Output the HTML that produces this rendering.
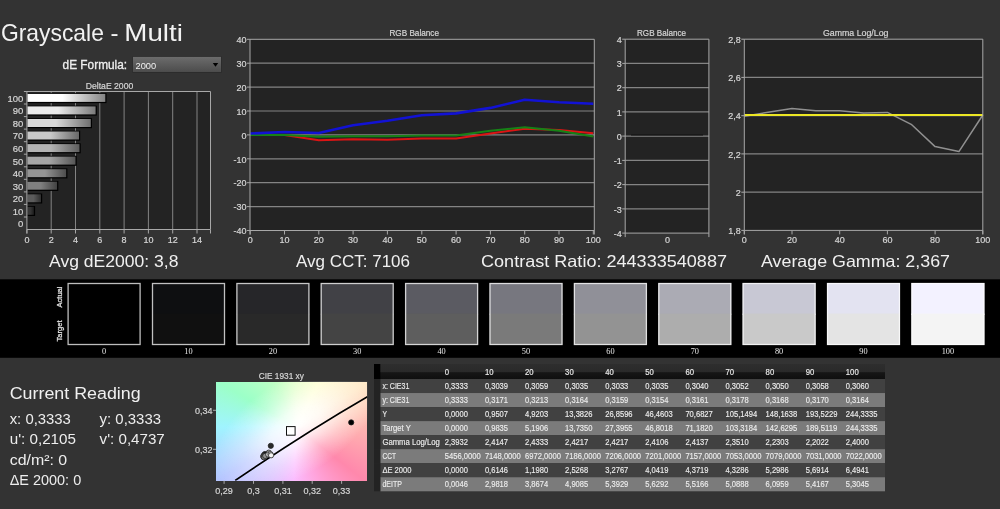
<!DOCTYPE html>
<html><head><meta charset="utf-8"><title>Grayscale - Multi</title>
<style>
html,body{margin:0;padding:0;background:#333333;}
body{width:1000px;height:509px;overflow:hidden;position:relative;font-family:"Liberation Sans",sans-serif;}
svg{position:absolute;left:0;top:0;display:block;will-change:transform}
text{font-family:"Liberation Sans",sans-serif;}
.l{stroke:#d6d6d6;stroke-width:0.2px}
.t{stroke:#ececec;stroke-width:0.15px}
.ser{font-family:"Liberation Serif",serif;}
</style></head><body>
<div id="cie" style="position:absolute;left:216px;top:381.6px;width:151.4px;height:99.2px;background:conic-gradient(from 0deg at 80px 45px, #e4ffc8 0deg, #ffffc8 27deg, #ffe6c0 58deg, #ffb4b0 90deg, #ff88ac 128deg, #ffa4dc 158deg, #fbbcff 182deg, #d8c0ff 207deg, #b4c4ff 235deg, #a0f4ff 270deg, #9cffc8 300deg, #c0ffc4 335deg, #e4ffc8 360deg)"></div>
<svg width="1000" height="509" viewBox="0 0 1000 509">
<defs>
<linearGradient id="dd" x1="0" y1="0" x2="0" y2="1"><stop offset="0" stop-color="#6c6c6c"/><stop offset="1" stop-color="#4c4c4c"/></linearGradient>
<linearGradient id="hd" x1="0" y1="0" x2="0" y2="1"><stop offset="0" stop-color="#2e2e2e"/><stop offset="0.5" stop-color="#2a2a2a"/><stop offset="0.58" stop-color="#161616"/><stop offset="1" stop-color="#0f0f0f"/></linearGradient>
<radialGradient id="wp" gradientUnits="userSpaceOnUse" cx="0" cy="0" r="1" gradientTransform="translate(296 426) rotate(-33) scale(95 48)"><stop offset="0" stop-color="#fff" stop-opacity="1"/><stop offset="0.3" stop-color="#fff" stop-opacity="0.8"/><stop offset="0.65" stop-color="#fff" stop-opacity="0.35"/><stop offset="1" stop-color="#fff" stop-opacity="0"/></radialGradient>
<clipPath id="cieclip"><rect x="216" y="381.6" width="151.4" height="99.2"/></clipPath>

<linearGradient id="b100" x1="0" y1="0" x2="1" y2="0"><stop offset="0" stop-color="rgb(255,255,255)"/><stop offset="0.45" stop-color="rgb(255,255,255)"/><stop offset="1" stop-color="rgb(132,132,132)"/></linearGradient>
<linearGradient id="b90" x1="0" y1="0" x2="1" y2="0"><stop offset="0" stop-color="rgb(235,235,235)"/><stop offset="0.45" stop-color="rgb(235,235,235)"/><stop offset="1" stop-color="rgb(122,122,122)"/></linearGradient>
<linearGradient id="b80" x1="0" y1="0" x2="1" y2="0"><stop offset="0" stop-color="rgb(217,217,217)"/><stop offset="0.45" stop-color="rgb(217,217,217)"/><stop offset="1" stop-color="rgb(112,112,112)"/></linearGradient>
<linearGradient id="b70" x1="0" y1="0" x2="1" y2="0"><stop offset="0" stop-color="rgb(200,200,200)"/><stop offset="0.45" stop-color="rgb(200,200,200)"/><stop offset="1" stop-color="rgb(104,104,104)"/></linearGradient>
<linearGradient id="b60" x1="0" y1="0" x2="1" y2="0"><stop offset="0" stop-color="rgb(180,180,180)"/><stop offset="0.45" stop-color="rgb(180,180,180)"/><stop offset="1" stop-color="rgb(93,93,93)"/></linearGradient>
<linearGradient id="b50" x1="0" y1="0" x2="1" y2="0"><stop offset="0" stop-color="rgb(166,166,166)"/><stop offset="0.45" stop-color="rgb(166,166,166)"/><stop offset="1" stop-color="rgb(86,86,86)"/></linearGradient>
<linearGradient id="b40" x1="0" y1="0" x2="1" y2="0"><stop offset="0" stop-color="rgb(149,149,149)"/><stop offset="0.45" stop-color="rgb(149,149,149)"/><stop offset="1" stop-color="rgb(77,77,77)"/></linearGradient>
<linearGradient id="b30" x1="0" y1="0" x2="1" y2="0"><stop offset="0" stop-color="rgb(128,128,128)"/><stop offset="0.45" stop-color="rgb(128,128,128)"/><stop offset="1" stop-color="rgb(66,66,66)"/></linearGradient>
<linearGradient id="b20" x1="0" y1="0" x2="1" y2="0"><stop offset="0" stop-color="rgb(92,92,92)"/><stop offset="0.45" stop-color="rgb(92,92,92)"/><stop offset="1" stop-color="rgb(47,47,47)"/></linearGradient>
<linearGradient id="b10" x1="0" y1="0" x2="1" y2="0"><stop offset="0" stop-color="rgb(54,54,54)"/><stop offset="0.45" stop-color="rgb(54,54,54)"/><stop offset="1" stop-color="rgb(28,28,28)"/></linearGradient>
<linearGradient id="b0" x1="0" y1="0" x2="1" y2="0"><stop offset="0" stop-color="rgb(40,40,40)"/><stop offset="0.45" stop-color="rgb(40,40,40)"/><stop offset="1" stop-color="rgb(20,20,20)"/></linearGradient>
</defs>
<text y="41" font-size="24" fill="#f2f2f2"><tspan x="0.9" textLength="103" lengthAdjust="spacingAndGlyphs">Grayscale</tspan><tspan> </tspan><tspan x="110.6" textLength="8" lengthAdjust="spacingAndGlyphs">-</tspan><tspan> </tspan><tspan x="124.3" textLength="58.5" lengthAdjust="spacingAndGlyphs">Multi</tspan></text>
<text x="62.6" y="69.3" font-size="12" fill="#efefef" stroke="#efefef" stroke-width="0.3" textLength="64.5" lengthAdjust="spacingAndGlyphs">dE Formula:</text>
<rect x="132.4" y="56.4" width="89.4" height="16.4" fill="#2b2b2b"/>
<rect x="133" y="56.9" width="88" height="15.1" fill="url(#dd)"/>
<text x="135.5" y="69.3" font-size="9.5" fill="#f0f0f0" textLength="20.7" lengthAdjust="spacingAndGlyphs">2000</text>
<path d="M212.8 63.1 L218.2 63.1 L215.5 66.7 Z" fill="#000"/>
<text x="109.5" y="88.6" class="l" font-size="9" fill="#d6d6d6" text-anchor="middle" textLength="47.5" lengthAdjust="spacingAndGlyphs">DeltaE 2000</text>
<rect x="26.9" y="91.5" width="183.6" height="138.0" fill="#232323"/>
<line x1="51.2" y1="91.5" x2="51.2" y2="229.5" stroke="#848484" stroke-width="1"/>
<line x1="75.5" y1="91.5" x2="75.5" y2="229.5" stroke="#848484" stroke-width="1"/>
<line x1="99.8" y1="91.5" x2="99.8" y2="229.5" stroke="#848484" stroke-width="1"/>
<line x1="124.1" y1="91.5" x2="124.1" y2="229.5" stroke="#848484" stroke-width="1"/>
<line x1="148.4" y1="91.5" x2="148.4" y2="229.5" stroke="#848484" stroke-width="1"/>
<line x1="172.7" y1="91.5" x2="172.7" y2="229.5" stroke="#848484" stroke-width="1"/>
<line x1="197.0" y1="91.5" x2="197.0" y2="229.5" stroke="#848484" stroke-width="1"/>
<rect x="27.4" y="93.1" width="79.1" height="10.0" fill="#000"/>
<rect x="27.4" y="93.9" width="77.9" height="8" fill="url(#b100)"/>
<text x="23.3" y="101.8" class="l" font-size="9.5" fill="#d6d6d6" text-anchor="end">100</text>
<line x1="23.9" y1="91.5" x2="26.9" y2="91.5" stroke="#a8a8a8" stroke-width="1"/>
<rect x="27.4" y="105.6" width="69.4" height="10.0" fill="#000"/>
<rect x="27.4" y="106.4" width="68.2" height="8" fill="url(#b90)"/>
<text x="23.3" y="114.3" class="l" font-size="9.5" fill="#d6d6d6" text-anchor="end">90</text>
<line x1="23.9" y1="104.0" x2="26.9" y2="104.0" stroke="#a8a8a8" stroke-width="1"/>
<rect x="27.4" y="118.2" width="64.6" height="10.0" fill="#000"/>
<rect x="27.4" y="119.0" width="63.4" height="8" fill="url(#b80)"/>
<text x="23.3" y="126.9" class="l" font-size="9.5" fill="#d6d6d6" text-anchor="end">80</text>
<line x1="23.9" y1="116.6" x2="26.9" y2="116.6" stroke="#a8a8a8" stroke-width="1"/>
<rect x="27.4" y="130.7" width="52.8" height="10.0" fill="#000"/>
<rect x="27.4" y="131.5" width="51.6" height="8" fill="url(#b70)"/>
<text x="23.3" y="139.4" class="l" font-size="9.5" fill="#d6d6d6" text-anchor="end">70</text>
<line x1="23.9" y1="129.1" x2="26.9" y2="129.1" stroke="#a8a8a8" stroke-width="1"/>
<rect x="27.4" y="143.3" width="53.3" height="10.0" fill="#000"/>
<rect x="27.4" y="144.1" width="52.1" height="8" fill="url(#b60)"/>
<text x="23.3" y="152.0" class="l" font-size="9.5" fill="#d6d6d6" text-anchor="end">60</text>
<line x1="23.9" y1="141.7" x2="26.9" y2="141.7" stroke="#a8a8a8" stroke-width="1"/>
<rect x="27.4" y="155.8" width="49.3" height="10.0" fill="#000"/>
<rect x="27.4" y="156.6" width="48.1" height="8" fill="url(#b50)"/>
<text x="23.3" y="164.5" class="l" font-size="9.5" fill="#d6d6d6" text-anchor="end">50</text>
<line x1="23.9" y1="154.2" x2="26.9" y2="154.2" stroke="#a8a8a8" stroke-width="1"/>
<rect x="27.4" y="168.4" width="40.0" height="10.0" fill="#000"/>
<rect x="27.4" y="169.2" width="38.8" height="8" fill="url(#b40)"/>
<text x="23.3" y="177.0" class="l" font-size="9.5" fill="#d6d6d6" text-anchor="end">40</text>
<line x1="23.9" y1="166.8" x2="26.9" y2="166.8" stroke="#a8a8a8" stroke-width="1"/>
<rect x="27.4" y="180.9" width="30.9" height="10.0" fill="#000"/>
<rect x="27.4" y="181.7" width="29.7" height="8" fill="url(#b30)"/>
<text x="23.3" y="189.6" class="l" font-size="9.5" fill="#d6d6d6" text-anchor="end">30</text>
<line x1="23.9" y1="179.3" x2="26.9" y2="179.3" stroke="#a8a8a8" stroke-width="1"/>
<rect x="27.4" y="193.5" width="14.8" height="10.0" fill="#000"/>
<rect x="27.4" y="194.3" width="13.6" height="8" fill="url(#b20)"/>
<text x="23.3" y="202.1" class="l" font-size="9.5" fill="#d6d6d6" text-anchor="end">20</text>
<line x1="23.9" y1="191.9" x2="26.9" y2="191.9" stroke="#a8a8a8" stroke-width="1"/>
<rect x="27.4" y="206.0" width="7.7" height="10.0" fill="#000"/>
<rect x="27.4" y="206.8" width="6.5" height="8" fill="url(#b10)"/>
<text x="23.3" y="214.7" class="l" font-size="9.5" fill="#d6d6d6" text-anchor="end">10</text>
<line x1="23.9" y1="204.4" x2="26.9" y2="204.4" stroke="#a8a8a8" stroke-width="1"/>
<text x="23.3" y="227.2" class="l" font-size="9.5" fill="#d6d6d6" text-anchor="end">0</text>
<line x1="23.9" y1="217.0" x2="26.9" y2="217.0" stroke="#a8a8a8" stroke-width="1"/>
<path d="M26.9 233.5 V91.5 H210.5 V229.5 H26.9" fill="none" stroke="#a8a8a8" stroke-width="1"/>
<line x1="26.9" y1="229.5" x2="26.9" y2="233.5" stroke="#a8a8a8" stroke-width="1"/>
<text x="26.9" y="242.6" class="l" font-size="9" fill="#d6d6d6" text-anchor="middle">0</text>
<line x1="51.2" y1="229.5" x2="51.2" y2="233.5" stroke="#a8a8a8" stroke-width="1"/>
<text x="51.2" y="242.6" class="l" font-size="9" fill="#d6d6d6" text-anchor="middle">2</text>
<line x1="75.5" y1="229.5" x2="75.5" y2="233.5" stroke="#a8a8a8" stroke-width="1"/>
<text x="75.5" y="242.6" class="l" font-size="9" fill="#d6d6d6" text-anchor="middle">4</text>
<line x1="99.8" y1="229.5" x2="99.8" y2="233.5" stroke="#a8a8a8" stroke-width="1"/>
<text x="99.8" y="242.6" class="l" font-size="9" fill="#d6d6d6" text-anchor="middle">6</text>
<line x1="124.1" y1="229.5" x2="124.1" y2="233.5" stroke="#a8a8a8" stroke-width="1"/>
<text x="124.1" y="242.6" class="l" font-size="9" fill="#d6d6d6" text-anchor="middle">8</text>
<line x1="148.4" y1="229.5" x2="148.4" y2="233.5" stroke="#a8a8a8" stroke-width="1"/>
<text x="148.4" y="242.6" class="l" font-size="9" fill="#d6d6d6" text-anchor="middle">10</text>
<line x1="172.7" y1="229.5" x2="172.7" y2="233.5" stroke="#a8a8a8" stroke-width="1"/>
<text x="172.7" y="242.6" class="l" font-size="9" fill="#d6d6d6" text-anchor="middle">12</text>
<line x1="197.0" y1="229.5" x2="197.0" y2="233.5" stroke="#a8a8a8" stroke-width="1"/>
<text x="197.0" y="242.6" class="l" font-size="9" fill="#d6d6d6" text-anchor="middle">14</text>
<line x1="210.5" y1="229.5" x2="210.5" y2="233.5" stroke="#a8a8a8" stroke-width="1"/>
<text x="414.2" y="35.6" class="l" font-size="9" fill="#d6d6d6" text-anchor="middle" textLength="49.6" lengthAdjust="spacingAndGlyphs">RGB Balance</text>
<rect x="250" y="39.3" width="344.29999999999995" height="191.2" fill="#232323"/>
<line x1="247" y1="230.5" x2="250" y2="230.5" stroke="#a8a8a8" stroke-width="1"/>
<text x="246.5" y="234.2" class="l" font-size="9" fill="#d6d6d6" text-anchor="end">-40</text>
<line x1="250" y1="206.6" x2="594.3" y2="206.6" stroke="#848484" stroke-width="1.2"/>
<line x1="247" y1="206.6" x2="250" y2="206.6" stroke="#a8a8a8" stroke-width="1"/>
<text x="246.5" y="210.3" class="l" font-size="9" fill="#d6d6d6" text-anchor="end">-30</text>
<line x1="250" y1="182.7" x2="594.3" y2="182.7" stroke="#848484" stroke-width="1.2"/>
<line x1="247" y1="182.7" x2="250" y2="182.7" stroke="#a8a8a8" stroke-width="1"/>
<text x="246.5" y="186.4" class="l" font-size="9" fill="#d6d6d6" text-anchor="end">-20</text>
<line x1="250" y1="158.8" x2="594.3" y2="158.8" stroke="#848484" stroke-width="1.2"/>
<line x1="247" y1="158.8" x2="250" y2="158.8" stroke="#a8a8a8" stroke-width="1"/>
<text x="246.5" y="162.5" class="l" font-size="9" fill="#d6d6d6" text-anchor="end">-10</text>
<line x1="250" y1="134.9" x2="594.3" y2="134.9" stroke="#848484" stroke-width="1.2"/>
<line x1="247" y1="134.9" x2="250" y2="134.9" stroke="#a8a8a8" stroke-width="1"/>
<text x="246.5" y="138.6" class="l" font-size="9" fill="#d6d6d6" text-anchor="end">0</text>
<line x1="250" y1="111.0" x2="594.3" y2="111.0" stroke="#848484" stroke-width="1.2"/>
<line x1="247" y1="111.0" x2="250" y2="111.0" stroke="#a8a8a8" stroke-width="1"/>
<text x="246.5" y="114.7" class="l" font-size="9" fill="#d6d6d6" text-anchor="end">10</text>
<line x1="250" y1="87.1" x2="594.3" y2="87.1" stroke="#848484" stroke-width="1.2"/>
<line x1="247" y1="87.1" x2="250" y2="87.1" stroke="#a8a8a8" stroke-width="1"/>
<text x="246.5" y="90.8" class="l" font-size="9" fill="#d6d6d6" text-anchor="end">20</text>
<line x1="250" y1="63.2" x2="594.3" y2="63.2" stroke="#848484" stroke-width="1.2"/>
<line x1="247" y1="63.2" x2="250" y2="63.2" stroke="#a8a8a8" stroke-width="1"/>
<text x="246.5" y="66.9" class="l" font-size="9" fill="#d6d6d6" text-anchor="end">30</text>
<line x1="247" y1="39.3" x2="250" y2="39.3" stroke="#a8a8a8" stroke-width="1"/>
<text x="246.5" y="43.0" class="l" font-size="9" fill="#d6d6d6" text-anchor="end">40</text>
<polyline points="250.2,134.9 284.5,134.9 318.8,140.2 353.1,139.2 387.4,139.7 421.8,138.5 456.1,138.5 490.4,133.6 524.7,128.7 559.0,129.9 593.3,133.2" fill="none" stroke="#dc1414" stroke-width="2" stroke-linejoin="round"/>
<polyline points="250.2,134.9 284.5,134.9 318.8,136.7 353.1,136.3 387.4,136.3 421.8,135.6 456.1,135.4 490.4,130.8 524.7,127.3 559.0,130.8 593.3,136.6" fill="none" stroke="#168216" stroke-width="2" stroke-linejoin="round"/>
<polyline points="250.2,133.5 284.5,132.0 318.8,133.0 353.1,125.3 387.4,120.8 421.8,115.3 456.1,113.4 490.4,107.9 524.7,99.8 559.0,102.2 593.3,103.8" fill="none" stroke="#1212d4" stroke-width="2.6" stroke-linejoin="round"/>
<path d="M250 234.5 V39.3 H594.3 V234.5 M250 230.5 H594.3" fill="none" stroke="#a8a8a8" stroke-width="1"/>
<line x1="250.2" y1="230.5" x2="250.2" y2="234.5" stroke="#a8a8a8" stroke-width="1"/>
<text x="250.2" y="242.7" class="l" font-size="9" fill="#d6d6d6" text-anchor="middle">0</text>
<line x1="284.5" y1="230.5" x2="284.5" y2="234.5" stroke="#a8a8a8" stroke-width="1"/>
<text x="284.5" y="242.7" class="l" font-size="9" fill="#d6d6d6" text-anchor="middle">10</text>
<line x1="318.8" y1="230.5" x2="318.8" y2="234.5" stroke="#a8a8a8" stroke-width="1"/>
<text x="318.8" y="242.7" class="l" font-size="9" fill="#d6d6d6" text-anchor="middle">20</text>
<line x1="353.1" y1="230.5" x2="353.1" y2="234.5" stroke="#a8a8a8" stroke-width="1"/>
<text x="353.1" y="242.7" class="l" font-size="9" fill="#d6d6d6" text-anchor="middle">30</text>
<line x1="387.4" y1="230.5" x2="387.4" y2="234.5" stroke="#a8a8a8" stroke-width="1"/>
<text x="387.4" y="242.7" class="l" font-size="9" fill="#d6d6d6" text-anchor="middle">40</text>
<line x1="421.8" y1="230.5" x2="421.8" y2="234.5" stroke="#a8a8a8" stroke-width="1"/>
<text x="421.8" y="242.7" class="l" font-size="9" fill="#d6d6d6" text-anchor="middle">50</text>
<line x1="456.1" y1="230.5" x2="456.1" y2="234.5" stroke="#a8a8a8" stroke-width="1"/>
<text x="456.1" y="242.7" class="l" font-size="9" fill="#d6d6d6" text-anchor="middle">60</text>
<line x1="490.4" y1="230.5" x2="490.4" y2="234.5" stroke="#a8a8a8" stroke-width="1"/>
<text x="490.4" y="242.7" class="l" font-size="9" fill="#d6d6d6" text-anchor="middle">70</text>
<line x1="524.7" y1="230.5" x2="524.7" y2="234.5" stroke="#a8a8a8" stroke-width="1"/>
<text x="524.7" y="242.7" class="l" font-size="9" fill="#d6d6d6" text-anchor="middle">80</text>
<line x1="559.0" y1="230.5" x2="559.0" y2="234.5" stroke="#a8a8a8" stroke-width="1"/>
<text x="559.0" y="242.7" class="l" font-size="9" fill="#d6d6d6" text-anchor="middle">90</text>
<line x1="593.3" y1="230.5" x2="593.3" y2="234.5" stroke="#a8a8a8" stroke-width="1"/>
<text x="593.3" y="242.7" class="l" font-size="9" fill="#d6d6d6" text-anchor="middle">100</text>
<text x="661.5" y="35.6" class="l" font-size="9" fill="#d6d6d6" text-anchor="middle" textLength="49" lengthAdjust="spacingAndGlyphs">RGB Balance</text>
<rect x="625.2" y="39.2" width="83.69999999999993" height="193.89999999999998" fill="#232323"/>
<line x1="622.2" y1="233.1" x2="625.2" y2="233.1" stroke="#a8a8a8" stroke-width="1"/>
<text x="621.7" y="236.8" class="l" font-size="9" fill="#d6d6d6" text-anchor="end">-4</text>
<line x1="625.2" y1="208.9" x2="708.9" y2="208.9" stroke="#848484" stroke-width="1.2"/>
<line x1="622.2" y1="208.9" x2="625.2" y2="208.9" stroke="#a8a8a8" stroke-width="1"/>
<text x="621.7" y="212.6" class="l" font-size="9" fill="#d6d6d6" text-anchor="end">-3</text>
<line x1="625.2" y1="184.6" x2="708.9" y2="184.6" stroke="#848484" stroke-width="1.2"/>
<line x1="622.2" y1="184.6" x2="625.2" y2="184.6" stroke="#a8a8a8" stroke-width="1"/>
<text x="621.7" y="188.3" class="l" font-size="9" fill="#d6d6d6" text-anchor="end">-2</text>
<line x1="625.2" y1="160.4" x2="708.9" y2="160.4" stroke="#848484" stroke-width="1.2"/>
<line x1="622.2" y1="160.4" x2="625.2" y2="160.4" stroke="#a8a8a8" stroke-width="1"/>
<text x="621.7" y="164.1" class="l" font-size="9" fill="#d6d6d6" text-anchor="end">-1</text>
<line x1="625.2" y1="136.1" x2="708.9" y2="136.1" stroke="#848484" stroke-width="1.2"/>
<line x1="622.2" y1="136.1" x2="625.2" y2="136.1" stroke="#a8a8a8" stroke-width="1"/>
<text x="621.7" y="139.8" class="l" font-size="9" fill="#d6d6d6" text-anchor="end">0</text>
<line x1="625.2" y1="111.9" x2="708.9" y2="111.9" stroke="#848484" stroke-width="1.2"/>
<line x1="622.2" y1="111.9" x2="625.2" y2="111.9" stroke="#a8a8a8" stroke-width="1"/>
<text x="621.7" y="115.6" class="l" font-size="9" fill="#d6d6d6" text-anchor="end">1</text>
<line x1="625.2" y1="87.7" x2="708.9" y2="87.7" stroke="#848484" stroke-width="1.2"/>
<line x1="622.2" y1="87.7" x2="625.2" y2="87.7" stroke="#a8a8a8" stroke-width="1"/>
<text x="621.7" y="91.4" class="l" font-size="9" fill="#d6d6d6" text-anchor="end">2</text>
<line x1="625.2" y1="63.4" x2="708.9" y2="63.4" stroke="#848484" stroke-width="1.2"/>
<line x1="622.2" y1="63.4" x2="625.2" y2="63.4" stroke="#a8a8a8" stroke-width="1"/>
<text x="621.7" y="67.1" class="l" font-size="9" fill="#d6d6d6" text-anchor="end">3</text>
<line x1="622.2" y1="39.2" x2="625.2" y2="39.2" stroke="#a8a8a8" stroke-width="1"/>
<text x="621.7" y="42.9" class="l" font-size="9" fill="#d6d6d6" text-anchor="end">4</text>
<line x1="631" y1="135" x2="703" y2="135" stroke="#111" stroke-width="1.2"/>
<path d="M625.2 237.1 V39.2 H708.9 V237.1 M625.2 233.1 H708.9" fill="none" stroke="#a8a8a8" stroke-width="1"/>
<text x="667.5" y="242.7" class="l" font-size="9" fill="#d6d6d6" text-anchor="middle">0</text>
<text x="855.7" y="35.6" class="l" font-size="9" fill="#d6d6d6" text-anchor="middle" textLength="65.5" lengthAdjust="spacingAndGlyphs">Gamma Log/Log</text>
<rect x="744.3" y="39.2" width="238.5" height="191.2" fill="#232323"/>
<line x1="741.3" y1="39.2" x2="744.3" y2="39.2" stroke="#a8a8a8" stroke-width="1"/>
<text x="740.8" y="42.9" class="l" font-size="9" fill="#d6d6d6" text-anchor="end">2,8</text>
<line x1="744.3" y1="77.4" x2="982.8" y2="77.4" stroke="#848484" stroke-width="1.2"/>
<line x1="741.3" y1="77.4" x2="744.3" y2="77.4" stroke="#a8a8a8" stroke-width="1"/>
<text x="740.8" y="81.1" class="l" font-size="9" fill="#d6d6d6" text-anchor="end">2,6</text>
<line x1="744.3" y1="115.7" x2="982.8" y2="115.7" stroke="#848484" stroke-width="1.2"/>
<line x1="741.3" y1="115.7" x2="744.3" y2="115.7" stroke="#a8a8a8" stroke-width="1"/>
<text x="740.8" y="119.4" class="l" font-size="9" fill="#d6d6d6" text-anchor="end">2,4</text>
<line x1="744.3" y1="153.9" x2="982.8" y2="153.9" stroke="#848484" stroke-width="1.2"/>
<line x1="741.3" y1="153.9" x2="744.3" y2="153.9" stroke="#a8a8a8" stroke-width="1"/>
<text x="740.8" y="157.6" class="l" font-size="9" fill="#d6d6d6" text-anchor="end">2,2</text>
<line x1="744.3" y1="192.2" x2="982.8" y2="192.2" stroke="#848484" stroke-width="1.2"/>
<line x1="741.3" y1="192.2" x2="744.3" y2="192.2" stroke="#a8a8a8" stroke-width="1"/>
<text x="740.8" y="195.9" class="l" font-size="9" fill="#d6d6d6" text-anchor="end">2</text>
<line x1="741.3" y1="230.4" x2="744.3" y2="230.4" stroke="#a8a8a8" stroke-width="1"/>
<text x="740.8" y="234.1" class="l" font-size="9" fill="#d6d6d6" text-anchor="end">1,8</text>
<polyline points="744.3,116.3 768.1,112.2 792.0,108.6 815.8,110.8 839.7,110.8 863.5,113.0 887.4,112.4 911.2,124.3 935.1,146.6 958.9,151.6 982.8,115.0" fill="none" stroke="#909090" stroke-width="1.5" stroke-linejoin="round"/>
<line x1="744.3" y1="115.0" x2="982.8" y2="115.0" stroke="#ece624" stroke-width="1.9"/>
<path d="M744.3 234.4 V39.2 H982.8 V234.4 M744.3 230.4 H982.8" fill="none" stroke="#a8a8a8" stroke-width="1"/>
<line x1="744.3" y1="230.4" x2="744.3" y2="234.4" stroke="#a8a8a8" stroke-width="1"/>
<text x="744.3" y="242.7" class="l" font-size="9" fill="#d6d6d6" text-anchor="middle">0</text>
<line x1="792.0" y1="230.4" x2="792.0" y2="234.4" stroke="#a8a8a8" stroke-width="1"/>
<text x="792.0" y="242.7" class="l" font-size="9" fill="#d6d6d6" text-anchor="middle">20</text>
<line x1="839.7" y1="230.4" x2="839.7" y2="234.4" stroke="#a8a8a8" stroke-width="1"/>
<text x="839.7" y="242.7" class="l" font-size="9" fill="#d6d6d6" text-anchor="middle">40</text>
<line x1="887.4" y1="230.4" x2="887.4" y2="234.4" stroke="#a8a8a8" stroke-width="1"/>
<text x="887.4" y="242.7" class="l" font-size="9" fill="#d6d6d6" text-anchor="middle">60</text>
<line x1="935.1" y1="230.4" x2="935.1" y2="234.4" stroke="#a8a8a8" stroke-width="1"/>
<text x="935.1" y="242.7" class="l" font-size="9" fill="#d6d6d6" text-anchor="middle">80</text>
<line x1="982.8" y1="230.4" x2="982.8" y2="234.4" stroke="#a8a8a8" stroke-width="1"/>
<text x="982.8" y="242.7" class="l" font-size="9" fill="#d6d6d6" text-anchor="middle">100</text>
<text x="49" y="267.4" font-size="16.5" fill="#f0f0f0" textLength="129.5" lengthAdjust="spacingAndGlyphs">Avg dE2000: 3,8</text>
<text x="296" y="267.4" font-size="16.5" fill="#f0f0f0" textLength="114" lengthAdjust="spacingAndGlyphs">Avg CCT: 7106</text>
<text x="481" y="267.4" font-size="16.5" fill="#f0f0f0" textLength="246" lengthAdjust="spacingAndGlyphs">Contrast Ratio: 244333540887</text>
<text x="761" y="267.4" font-size="16.5" fill="#f0f0f0" textLength="189" lengthAdjust="spacingAndGlyphs">Average Gamma: 2,367</text>
<rect x="0" y="279.3" width="1000" height="78.5" fill="#000"/>
<rect x="67.6" y="283" width="73" height="32" fill="#000000"/>
<rect x="67.6" y="313.6" width="73" height="31.4" fill="#000000"/>
<rect x="68.1" y="283.5" width="72" height="61" fill="none" stroke="#ffffff" stroke-opacity="0.74" stroke-width="1.3"/>
<text class="ser" x="104.1" y="353.6" font-size="8.3" fill="#e8e8e8" text-anchor="middle">0</text>
<rect x="152.0" y="283" width="73" height="32" fill="#0e0f11"/>
<rect x="152.0" y="313.6" width="73" height="31.4" fill="#101010"/>
<rect x="152.5" y="283.5" width="72" height="61" fill="none" stroke="#ffffff" stroke-opacity="0.74" stroke-width="1.3"/>
<text class="ser" x="188.5" y="353.6" font-size="8.3" fill="#e8e8e8" text-anchor="middle">10</text>
<rect x="236.4" y="283" width="73" height="32" fill="#262629"/>
<rect x="236.4" y="313.6" width="73" height="31.4" fill="#292929"/>
<rect x="236.9" y="283.5" width="72" height="61" fill="none" stroke="#ffffff" stroke-opacity="0.74" stroke-width="1.3"/>
<text class="ser" x="272.9" y="353.6" font-size="8.3" fill="#e8e8e8" text-anchor="middle">20</text>
<rect x="320.7" y="283" width="73" height="32" fill="#414146"/>
<rect x="320.7" y="313.6" width="73" height="31.4" fill="#444444"/>
<rect x="321.2" y="283.5" width="72" height="61" fill="none" stroke="#ffffff" stroke-opacity="0.74" stroke-width="1.3"/>
<text class="ser" x="357.2" y="353.6" font-size="8.3" fill="#e8e8e8" text-anchor="middle">30</text>
<rect x="405.1" y="283" width="73" height="32" fill="#5b5b62"/>
<rect x="405.1" y="313.6" width="73" height="31.4" fill="#5e5e5e"/>
<rect x="405.6" y="283.5" width="72" height="61" fill="none" stroke="#ffffff" stroke-opacity="0.74" stroke-width="1.3"/>
<text class="ser" x="441.6" y="353.6" font-size="8.3" fill="#e8e8e8" text-anchor="middle">40</text>
<rect x="489.5" y="283" width="73" height="32" fill="#77777f"/>
<rect x="489.5" y="313.6" width="73" height="31.4" fill="#7a7a7a"/>
<rect x="490.0" y="283.5" width="72" height="61" fill="none" stroke="#ffffff" stroke-opacity="0.74" stroke-width="1.3"/>
<text class="ser" x="526.0" y="353.6" font-size="8.3" fill="#e8e8e8" text-anchor="middle">50</text>
<rect x="573.9" y="283" width="73" height="32" fill="#909098"/>
<rect x="573.9" y="313.6" width="73" height="31.4" fill="#939393"/>
<rect x="574.4" y="283.5" width="72" height="61" fill="none" stroke="#ffffff" stroke-opacity="0.74" stroke-width="1.3"/>
<text class="ser" x="610.4" y="353.6" font-size="8.3" fill="#e8e8e8" text-anchor="middle">60</text>
<rect x="658.3" y="283" width="73" height="32" fill="#ababb4"/>
<rect x="658.3" y="313.6" width="73" height="31.4" fill="#adadad"/>
<rect x="658.8" y="283.5" width="72" height="61" fill="none" stroke="#ffffff" stroke-opacity="0.74" stroke-width="1.3"/>
<text class="ser" x="694.8" y="353.6" font-size="8.3" fill="#e8e8e8" text-anchor="middle">70</text>
<rect x="742.6" y="283" width="73" height="32" fill="#c8c8d4"/>
<rect x="742.6" y="313.6" width="73" height="31.4" fill="#c9c9c9"/>
<rect x="743.1" y="283.5" width="72" height="61" fill="none" stroke="#ffffff" stroke-opacity="0.74" stroke-width="1.3"/>
<text class="ser" x="779.1" y="353.6" font-size="8.3" fill="#e8e8e8" text-anchor="middle">80</text>
<rect x="827.0" y="283" width="73" height="32" fill="#e3e3f1"/>
<rect x="827.0" y="313.6" width="73" height="31.4" fill="#e4e4e4"/>
<rect x="827.5" y="283.5" width="72" height="61" fill="none" stroke="#ffffff" stroke-opacity="0.74" stroke-width="1.3"/>
<text class="ser" x="863.5" y="353.6" font-size="8.3" fill="#e8e8e8" text-anchor="middle">90</text>
<rect x="911.4" y="283" width="73" height="32" fill="#f3f2ff"/>
<rect x="911.4" y="313.6" width="73" height="31.4" fill="#f4f4f4"/>
<rect x="911.9" y="283.5" width="72" height="61" fill="none" stroke="#ffffff" stroke-opacity="0.74" stroke-width="1.3"/>
<text class="ser" x="947.9" y="353.6" font-size="8.3" fill="#e8e8e8" text-anchor="middle">100</text>
<text transform="translate(61.5,307.5) rotate(-90)" font-size="8" fill="#e6e6e6" stroke="#e6e6e6" stroke-width="0.25" textLength="21" lengthAdjust="spacingAndGlyphs">Actual</text>
<text transform="translate(61.5,341.5) rotate(-90)" font-size="8" fill="#e6e6e6" stroke="#e6e6e6" stroke-width="0.25" textLength="21" lengthAdjust="spacingAndGlyphs">Target</text>
<text x="9.7" y="398.5" font-size="16.3" fill="#f0f0f0" textLength="131" lengthAdjust="spacingAndGlyphs">Current Reading</text>
<text x="9.7" y="424" font-size="14.3" fill="#ededed" textLength="61.2" lengthAdjust="spacingAndGlyphs">x: 0,3333</text>
<text x="99.6" y="424" font-size="14.3" fill="#ededed" textLength="61.4" lengthAdjust="spacingAndGlyphs">y: 0,3333</text>
<text x="9.7" y="444.0" font-size="14.3" fill="#ededed" textLength="66.3" lengthAdjust="spacingAndGlyphs">u': 0,2105</text>
<text x="99.6" y="444.0" font-size="14.3" fill="#ededed" textLength="65.2" lengthAdjust="spacingAndGlyphs">v': 0,4737</text>
<text x="9.7" y="465.2" font-size="14.3" fill="#ededed" textLength="57.5" lengthAdjust="spacingAndGlyphs">cd/m²: 0</text>
<text x="9.7" y="485.3" font-size="14.3" fill="#ededed" textLength="71.5" lengthAdjust="spacingAndGlyphs">ΔE 2000: 0</text>
<text x="281.3" y="378.6" class="l" font-size="9" fill="#d6d6d6" text-anchor="middle" textLength="45" lengthAdjust="spacingAndGlyphs">CIE 1931 xy</text>
<rect x="216" y="381.6" width="151.39999999999998" height="99.19999999999999" fill="url(#wp)"/>
<g clip-path="url(#cieclip)"><path d="M235.2 480.5 Q 306 432.3 367.4 396.8" fill="none" stroke="#000" stroke-width="1.6"/></g>
<line x1="224.1" y1="480.8" x2="224.1" y2="483.8" stroke="#a8a8a8" stroke-width="1"/>
<text x="224.1" y="494" class="l" font-size="9" fill="#d6d6d6" text-anchor="middle">0,29</text>
<line x1="253.5" y1="480.8" x2="253.5" y2="483.8" stroke="#a8a8a8" stroke-width="1"/>
<text x="253.5" y="494" class="l" font-size="9" fill="#d6d6d6" text-anchor="middle">0,3</text>
<line x1="282.9" y1="480.8" x2="282.9" y2="483.8" stroke="#a8a8a8" stroke-width="1"/>
<text x="282.9" y="494" class="l" font-size="9" fill="#d6d6d6" text-anchor="middle">0,31</text>
<line x1="312.2" y1="480.8" x2="312.2" y2="483.8" stroke="#a8a8a8" stroke-width="1"/>
<text x="312.2" y="494" class="l" font-size="9" fill="#d6d6d6" text-anchor="middle">0,32</text>
<line x1="341.6" y1="480.8" x2="341.6" y2="483.8" stroke="#a8a8a8" stroke-width="1"/>
<text x="341.6" y="494" class="l" font-size="9" fill="#d6d6d6" text-anchor="middle">0,33</text>
<line x1="213" y1="410.3" x2="216" y2="410.3" stroke="#a8a8a8" stroke-width="1"/>
<text x="212.5" y="413.5" class="l" font-size="9" fill="#d6d6d6" text-anchor="end">0,34</text>
<line x1="213" y1="449.3" x2="216" y2="449.3" stroke="#a8a8a8" stroke-width="1"/>
<text x="212.5" y="452.5" class="l" font-size="9" fill="#d6d6d6" text-anchor="end">0,32</text>
<rect x="286.5" y="426.6" width="8.6" height="8.6" fill="#fff" stroke="#111" stroke-width="1"/>
<circle cx="351.2" cy="422.4" r="2.6" fill="#000000" stroke="#222" stroke-width="0.8"/>
<circle cx="264.9" cy="454.0" r="2.6" fill="#101010" stroke="#222" stroke-width="0.8"/>
<circle cx="270.8" cy="445.8" r="2.6" fill="#292929" stroke="#222" stroke-width="0.8"/>
<circle cx="263.8" cy="455.3" r="2.6" fill="#444444" stroke="#222" stroke-width="0.8"/>
<circle cx="263.2" cy="456.3" r="2.6" fill="#5e5e5e" stroke="#222" stroke-width="0.8"/>
<circle cx="263.8" cy="457.3" r="2.6" fill="#7a7a7a" stroke="#222" stroke-width="0.8"/>
<circle cx="265.2" cy="455.9" r="2.6" fill="#939393" stroke="#222" stroke-width="0.8"/>
<circle cx="268.8" cy="452.6" r="2.6" fill="#adadad" stroke="#222" stroke-width="0.8"/>
<circle cx="268.2" cy="454.5" r="2.6" fill="#c9c9c9" stroke="#222" stroke-width="0.8"/>
<circle cx="270.5" cy="454.2" r="2.6" fill="#e4e4e4" stroke="#222" stroke-width="0.8"/>
<circle cx="271.1" cy="455.3" r="2.6" fill="#f4f4f4" stroke="#222" stroke-width="0.8"/>
<rect x="374" y="364" width="511" height="15" fill="url(#hd)"/>
<rect x="374" y="364" width="6.3" height="15" fill="#000"/>
<text x="444.8" y="374.8" class="t" font-size="8.7" fill="#ececec" textLength="4.3" lengthAdjust="spacingAndGlyphs">0</text>
<text x="484.9" y="374.8" class="t" font-size="8.7" fill="#ececec" textLength="8.6" lengthAdjust="spacingAndGlyphs">10</text>
<text x="525.0" y="374.8" class="t" font-size="8.7" fill="#ececec" textLength="8.6" lengthAdjust="spacingAndGlyphs">20</text>
<text x="565.1" y="374.8" class="t" font-size="8.7" fill="#ececec" textLength="8.6" lengthAdjust="spacingAndGlyphs">30</text>
<text x="605.2" y="374.8" class="t" font-size="8.7" fill="#ececec" textLength="8.6" lengthAdjust="spacingAndGlyphs">40</text>
<text x="645.3" y="374.8" class="t" font-size="8.7" fill="#ececec" textLength="8.6" lengthAdjust="spacingAndGlyphs">50</text>
<text x="685.4" y="374.8" class="t" font-size="8.7" fill="#ececec" textLength="8.6" lengthAdjust="spacingAndGlyphs">60</text>
<text x="725.5" y="374.8" class="t" font-size="8.7" fill="#ececec" textLength="8.6" lengthAdjust="spacingAndGlyphs">70</text>
<text x="765.6" y="374.8" class="t" font-size="8.7" fill="#ececec" textLength="8.6" lengthAdjust="spacingAndGlyphs">80</text>
<text x="805.7" y="374.8" class="t" font-size="8.7" fill="#ececec" textLength="8.6" lengthAdjust="spacingAndGlyphs">90</text>
<text x="845.8" y="374.8" class="t" font-size="8.7" fill="#ececec" textLength="12.9" lengthAdjust="spacingAndGlyphs">100</text>
<rect x="380.3" y="379.00" width="504.7" height="14.08" fill="#414141"/>
<rect x="374" y="379.00" width="6.3" height="14.08" fill="#232323"/>
<text x="382.4" y="389.1" class="t" font-size="8.7" fill="#ececec" textLength="27" lengthAdjust="spacingAndGlyphs">x: CIE31</text>
<text x="444.8" y="389.1" class="t" font-size="8.7" fill="#ececec" textLength="23.1" lengthAdjust="spacingAndGlyphs">0,3333</text>
<text x="484.9" y="389.1" class="t" font-size="8.7" fill="#ececec" textLength="23.1" lengthAdjust="spacingAndGlyphs">0,3039</text>
<text x="525.0" y="389.1" class="t" font-size="8.7" fill="#ececec" textLength="23.1" lengthAdjust="spacingAndGlyphs">0,3059</text>
<text x="565.1" y="389.1" class="t" font-size="8.7" fill="#ececec" textLength="23.1" lengthAdjust="spacingAndGlyphs">0,3035</text>
<text x="605.2" y="389.1" class="t" font-size="8.7" fill="#ececec" textLength="23.1" lengthAdjust="spacingAndGlyphs">0,3033</text>
<text x="645.3" y="389.1" class="t" font-size="8.7" fill="#ececec" textLength="23.1" lengthAdjust="spacingAndGlyphs">0,3035</text>
<text x="685.4" y="389.1" class="t" font-size="8.7" fill="#ececec" textLength="23.1" lengthAdjust="spacingAndGlyphs">0,3040</text>
<text x="725.5" y="389.1" class="t" font-size="8.7" fill="#ececec" textLength="23.1" lengthAdjust="spacingAndGlyphs">0,3052</text>
<text x="765.6" y="389.1" class="t" font-size="8.7" fill="#ececec" textLength="23.1" lengthAdjust="spacingAndGlyphs">0,3050</text>
<text x="805.7" y="389.1" class="t" font-size="8.7" fill="#ececec" textLength="23.1" lengthAdjust="spacingAndGlyphs">0,3058</text>
<text x="845.8" y="389.1" class="t" font-size="8.7" fill="#ececec" textLength="23.1" lengthAdjust="spacingAndGlyphs">0,3060</text>
<rect x="380.3" y="393.03" width="504.7" height="14.08" fill="#7b7b7b"/>
<rect x="374" y="393.03" width="6.3" height="14.08" fill="#232323"/>
<text x="382.4" y="403.1" class="t" font-size="8.7" fill="#ececec" textLength="27" lengthAdjust="spacingAndGlyphs">y: CIE31</text>
<text x="444.8" y="403.1" class="t" font-size="8.7" fill="#ececec" textLength="23.1" lengthAdjust="spacingAndGlyphs">0,3333</text>
<text x="484.9" y="403.1" class="t" font-size="8.7" fill="#ececec" textLength="23.1" lengthAdjust="spacingAndGlyphs">0,3171</text>
<text x="525.0" y="403.1" class="t" font-size="8.7" fill="#ececec" textLength="23.1" lengthAdjust="spacingAndGlyphs">0,3213</text>
<text x="565.1" y="403.1" class="t" font-size="8.7" fill="#ececec" textLength="23.1" lengthAdjust="spacingAndGlyphs">0,3164</text>
<text x="605.2" y="403.1" class="t" font-size="8.7" fill="#ececec" textLength="23.1" lengthAdjust="spacingAndGlyphs">0,3159</text>
<text x="645.3" y="403.1" class="t" font-size="8.7" fill="#ececec" textLength="23.1" lengthAdjust="spacingAndGlyphs">0,3154</text>
<text x="685.4" y="403.1" class="t" font-size="8.7" fill="#ececec" textLength="23.1" lengthAdjust="spacingAndGlyphs">0,3161</text>
<text x="725.5" y="403.1" class="t" font-size="8.7" fill="#ececec" textLength="23.1" lengthAdjust="spacingAndGlyphs">0,3178</text>
<text x="765.6" y="403.1" class="t" font-size="8.7" fill="#ececec" textLength="23.1" lengthAdjust="spacingAndGlyphs">0,3168</text>
<text x="805.7" y="403.1" class="t" font-size="8.7" fill="#ececec" textLength="23.1" lengthAdjust="spacingAndGlyphs">0,3170</text>
<text x="845.8" y="403.1" class="t" font-size="8.7" fill="#ececec" textLength="23.1" lengthAdjust="spacingAndGlyphs">0,3164</text>
<rect x="380.3" y="407.06" width="504.7" height="14.08" fill="#414141"/>
<rect x="374" y="407.06" width="6.3" height="14.08" fill="#232323"/>
<text x="382.4" y="417.2" class="t" font-size="8.7" fill="#ececec" textLength="4.5" lengthAdjust="spacingAndGlyphs">Y</text>
<text x="444.8" y="417.2" class="t" font-size="8.7" fill="#ececec" textLength="23.1" lengthAdjust="spacingAndGlyphs">0,0000</text>
<text x="484.9" y="417.2" class="t" font-size="8.7" fill="#ececec" textLength="23.1" lengthAdjust="spacingAndGlyphs">0,9507</text>
<text x="525.0" y="417.2" class="t" font-size="8.7" fill="#ececec" textLength="23.1" lengthAdjust="spacingAndGlyphs">4,9203</text>
<text x="565.1" y="417.2" class="t" font-size="8.7" fill="#ececec" textLength="27.4" lengthAdjust="spacingAndGlyphs">13,3826</text>
<text x="605.2" y="417.2" class="t" font-size="8.7" fill="#ececec" textLength="27.4" lengthAdjust="spacingAndGlyphs">26,8596</text>
<text x="645.3" y="417.2" class="t" font-size="8.7" fill="#ececec" textLength="27.4" lengthAdjust="spacingAndGlyphs">46,4603</text>
<text x="685.4" y="417.2" class="t" font-size="8.7" fill="#ececec" textLength="27.4" lengthAdjust="spacingAndGlyphs">70,6827</text>
<text x="725.5" y="417.2" class="t" font-size="8.7" fill="#ececec" textLength="31.7" lengthAdjust="spacingAndGlyphs">105,1494</text>
<text x="765.6" y="417.2" class="t" font-size="8.7" fill="#ececec" textLength="31.7" lengthAdjust="spacingAndGlyphs">148,1638</text>
<text x="805.7" y="417.2" class="t" font-size="8.7" fill="#ececec" textLength="31.7" lengthAdjust="spacingAndGlyphs">193,5229</text>
<text x="845.8" y="417.2" class="t" font-size="8.7" fill="#ececec" textLength="31.7" lengthAdjust="spacingAndGlyphs">244,3335</text>
<rect x="380.3" y="421.09" width="504.7" height="14.08" fill="#7b7b7b"/>
<rect x="374" y="421.09" width="6.3" height="14.08" fill="#232323"/>
<text x="382.4" y="431.2" class="t" font-size="8.7" fill="#ececec" textLength="28.5" lengthAdjust="spacingAndGlyphs">Target Y</text>
<text x="444.8" y="431.2" class="t" font-size="8.7" fill="#ececec" textLength="23.1" lengthAdjust="spacingAndGlyphs">0,0000</text>
<text x="484.9" y="431.2" class="t" font-size="8.7" fill="#ececec" textLength="23.1" lengthAdjust="spacingAndGlyphs">0,9835</text>
<text x="525.0" y="431.2" class="t" font-size="8.7" fill="#ececec" textLength="23.1" lengthAdjust="spacingAndGlyphs">5,1906</text>
<text x="565.1" y="431.2" class="t" font-size="8.7" fill="#ececec" textLength="27.4" lengthAdjust="spacingAndGlyphs">13,7350</text>
<text x="605.2" y="431.2" class="t" font-size="8.7" fill="#ececec" textLength="27.4" lengthAdjust="spacingAndGlyphs">27,3955</text>
<text x="645.3" y="431.2" class="t" font-size="8.7" fill="#ececec" textLength="27.4" lengthAdjust="spacingAndGlyphs">46,8018</text>
<text x="685.4" y="431.2" class="t" font-size="8.7" fill="#ececec" textLength="27.4" lengthAdjust="spacingAndGlyphs">71,1820</text>
<text x="725.5" y="431.2" class="t" font-size="8.7" fill="#ececec" textLength="31.7" lengthAdjust="spacingAndGlyphs">103,3184</text>
<text x="765.6" y="431.2" class="t" font-size="8.7" fill="#ececec" textLength="31.7" lengthAdjust="spacingAndGlyphs">142,6295</text>
<text x="805.7" y="431.2" class="t" font-size="8.7" fill="#ececec" textLength="31.7" lengthAdjust="spacingAndGlyphs">189,5119</text>
<text x="845.8" y="431.2" class="t" font-size="8.7" fill="#ececec" textLength="31.7" lengthAdjust="spacingAndGlyphs">244,3335</text>
<rect x="380.3" y="435.12" width="504.7" height="14.08" fill="#414141"/>
<rect x="374" y="435.12" width="6.3" height="14.08" fill="#232323"/>
<text x="382.4" y="445.2" class="t" font-size="8.7" fill="#ececec" textLength="57.5" lengthAdjust="spacingAndGlyphs">Gamma Log/Log</text>
<text x="444.8" y="445.2" class="t" font-size="8.7" fill="#ececec" textLength="23.1" lengthAdjust="spacingAndGlyphs">2,3932</text>
<text x="484.9" y="445.2" class="t" font-size="8.7" fill="#ececec" textLength="23.1" lengthAdjust="spacingAndGlyphs">2,4147</text>
<text x="525.0" y="445.2" class="t" font-size="8.7" fill="#ececec" textLength="23.1" lengthAdjust="spacingAndGlyphs">2,4333</text>
<text x="565.1" y="445.2" class="t" font-size="8.7" fill="#ececec" textLength="23.1" lengthAdjust="spacingAndGlyphs">2,4217</text>
<text x="605.2" y="445.2" class="t" font-size="8.7" fill="#ececec" textLength="23.1" lengthAdjust="spacingAndGlyphs">2,4217</text>
<text x="645.3" y="445.2" class="t" font-size="8.7" fill="#ececec" textLength="23.1" lengthAdjust="spacingAndGlyphs">2,4106</text>
<text x="685.4" y="445.2" class="t" font-size="8.7" fill="#ececec" textLength="23.1" lengthAdjust="spacingAndGlyphs">2,4137</text>
<text x="725.5" y="445.2" class="t" font-size="8.7" fill="#ececec" textLength="23.1" lengthAdjust="spacingAndGlyphs">2,3510</text>
<text x="765.6" y="445.2" class="t" font-size="8.7" fill="#ececec" textLength="23.1" lengthAdjust="spacingAndGlyphs">2,2303</text>
<text x="805.7" y="445.2" class="t" font-size="8.7" fill="#ececec" textLength="23.1" lengthAdjust="spacingAndGlyphs">2,2022</text>
<text x="845.8" y="445.2" class="t" font-size="8.7" fill="#ececec" textLength="23.1" lengthAdjust="spacingAndGlyphs">2,4000</text>
<rect x="380.3" y="449.15" width="504.7" height="14.08" fill="#7b7b7b"/>
<rect x="374" y="449.15" width="6.3" height="14.08" fill="#232323"/>
<text x="382.4" y="459.2" class="t" font-size="8.7" fill="#ececec" textLength="13.5" lengthAdjust="spacingAndGlyphs">CCT</text>
<text x="444.8" y="459.2" class="t" font-size="8.7" fill="#ececec" textLength="35.9" lengthAdjust="spacingAndGlyphs">5456,0000</text>
<text x="484.9" y="459.2" class="t" font-size="8.7" fill="#ececec" textLength="35.9" lengthAdjust="spacingAndGlyphs">7148,0000</text>
<text x="525.0" y="459.2" class="t" font-size="8.7" fill="#ececec" textLength="35.9" lengthAdjust="spacingAndGlyphs">6972,0000</text>
<text x="565.1" y="459.2" class="t" font-size="8.7" fill="#ececec" textLength="35.9" lengthAdjust="spacingAndGlyphs">7186,0000</text>
<text x="605.2" y="459.2" class="t" font-size="8.7" fill="#ececec" textLength="35.9" lengthAdjust="spacingAndGlyphs">7206,0000</text>
<text x="645.3" y="459.2" class="t" font-size="8.7" fill="#ececec" textLength="35.9" lengthAdjust="spacingAndGlyphs">7201,0000</text>
<text x="685.4" y="459.2" class="t" font-size="8.7" fill="#ececec" textLength="35.9" lengthAdjust="spacingAndGlyphs">7157,0000</text>
<text x="725.5" y="459.2" class="t" font-size="8.7" fill="#ececec" textLength="35.9" lengthAdjust="spacingAndGlyphs">7053,0000</text>
<text x="765.6" y="459.2" class="t" font-size="8.7" fill="#ececec" textLength="35.9" lengthAdjust="spacingAndGlyphs">7079,0000</text>
<text x="805.7" y="459.2" class="t" font-size="8.7" fill="#ececec" textLength="35.9" lengthAdjust="spacingAndGlyphs">7031,0000</text>
<text x="845.8" y="459.2" class="t" font-size="8.7" fill="#ececec" textLength="35.9" lengthAdjust="spacingAndGlyphs">7022,0000</text>
<rect x="380.3" y="463.18" width="504.7" height="14.08" fill="#414141"/>
<rect x="374" y="463.18" width="6.3" height="14.08" fill="#232323"/>
<text x="382.4" y="473.3" class="t" font-size="8.7" fill="#ececec" textLength="29" lengthAdjust="spacingAndGlyphs">ΔE 2000</text>
<text x="444.8" y="473.3" class="t" font-size="8.7" fill="#ececec" textLength="23.1" lengthAdjust="spacingAndGlyphs">0,0000</text>
<text x="484.9" y="473.3" class="t" font-size="8.7" fill="#ececec" textLength="23.1" lengthAdjust="spacingAndGlyphs">0,6146</text>
<text x="525.0" y="473.3" class="t" font-size="8.7" fill="#ececec" textLength="23.1" lengthAdjust="spacingAndGlyphs">1,1980</text>
<text x="565.1" y="473.3" class="t" font-size="8.7" fill="#ececec" textLength="23.1" lengthAdjust="spacingAndGlyphs">2,5268</text>
<text x="605.2" y="473.3" class="t" font-size="8.7" fill="#ececec" textLength="23.1" lengthAdjust="spacingAndGlyphs">3,2767</text>
<text x="645.3" y="473.3" class="t" font-size="8.7" fill="#ececec" textLength="23.1" lengthAdjust="spacingAndGlyphs">4,0419</text>
<text x="685.4" y="473.3" class="t" font-size="8.7" fill="#ececec" textLength="23.1" lengthAdjust="spacingAndGlyphs">4,3719</text>
<text x="725.5" y="473.3" class="t" font-size="8.7" fill="#ececec" textLength="23.1" lengthAdjust="spacingAndGlyphs">4,3286</text>
<text x="765.6" y="473.3" class="t" font-size="8.7" fill="#ececec" textLength="23.1" lengthAdjust="spacingAndGlyphs">5,2986</text>
<text x="805.7" y="473.3" class="t" font-size="8.7" fill="#ececec" textLength="23.1" lengthAdjust="spacingAndGlyphs">5,6914</text>
<text x="845.8" y="473.3" class="t" font-size="8.7" fill="#ececec" textLength="23.1" lengthAdjust="spacingAndGlyphs">6,4941</text>
<rect x="380.3" y="477.21" width="504.7" height="14.08" fill="#7b7b7b"/>
<rect x="374" y="477.21" width="6.3" height="14.08" fill="#232323"/>
<text x="382.4" y="487.3" class="t" font-size="8.7" fill="#ececec" textLength="19.5" lengthAdjust="spacingAndGlyphs">dEITP</text>
<text x="444.8" y="487.3" class="t" font-size="8.7" fill="#ececec" textLength="23.1" lengthAdjust="spacingAndGlyphs">0,0046</text>
<text x="484.9" y="487.3" class="t" font-size="8.7" fill="#ececec" textLength="23.1" lengthAdjust="spacingAndGlyphs">2,9818</text>
<text x="525.0" y="487.3" class="t" font-size="8.7" fill="#ececec" textLength="23.1" lengthAdjust="spacingAndGlyphs">3,8674</text>
<text x="565.1" y="487.3" class="t" font-size="8.7" fill="#ececec" textLength="23.1" lengthAdjust="spacingAndGlyphs">4,9085</text>
<text x="605.2" y="487.3" class="t" font-size="8.7" fill="#ececec" textLength="23.1" lengthAdjust="spacingAndGlyphs">5,3929</text>
<text x="645.3" y="487.3" class="t" font-size="8.7" fill="#ececec" textLength="23.1" lengthAdjust="spacingAndGlyphs">5,6292</text>
<text x="685.4" y="487.3" class="t" font-size="8.7" fill="#ececec" textLength="23.1" lengthAdjust="spacingAndGlyphs">5,5166</text>
<text x="725.5" y="487.3" class="t" font-size="8.7" fill="#ececec" textLength="23.1" lengthAdjust="spacingAndGlyphs">5,0888</text>
<text x="765.6" y="487.3" class="t" font-size="8.7" fill="#ececec" textLength="23.1" lengthAdjust="spacingAndGlyphs">6,0959</text>
<text x="805.7" y="487.3" class="t" font-size="8.7" fill="#ececec" textLength="23.1" lengthAdjust="spacingAndGlyphs">5,4167</text>
<text x="845.8" y="487.3" class="t" font-size="8.7" fill="#ececec" textLength="23.1" lengthAdjust="spacingAndGlyphs">5,3045</text>
</svg></body></html>
